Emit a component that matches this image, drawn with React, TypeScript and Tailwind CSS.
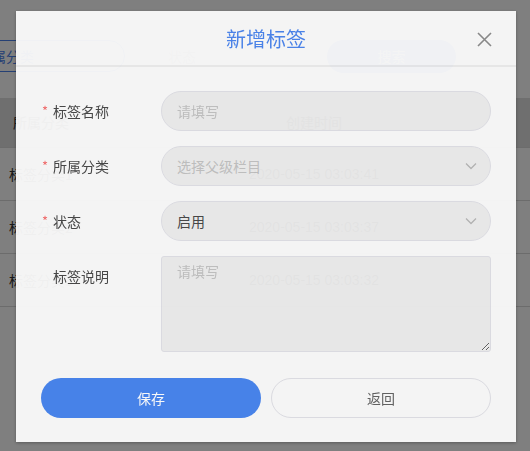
const rows = [
  { name: '标签分类1', time: '2020-05-15 03:03:41' },
  { name: '标签分类2', time: '2020-05-15 03:03:37' },
  { name: '标签分类3', time: '2020-05-15 03:03:32' },
];

const Chevron = () => (
  <svg width="12" height="8" viewBox="0 0 12 8" className="absolute right-[13px] top-1/2 -translate-y-1/2">
    <polyline points="1,1.5 6,6.5 11,1.5" fill="none" stroke="#b5b5b5" strokeWidth="1.3" />
  </svg>
);

const Label = ({ text, required }: { text: string; required?: boolean }) => (
  <div className="flex h-[40px] w-[145px] shrink-0 items-center pl-[26px] text-[14px] text-[#454545]">
    <span className="w-[11px] text-[13px] text-[#f56c6c]">{required ? '*' : ''}</span>
    <span>{text}</span>
  </div>
);

// the list page that sits under the dialog
const PageBehind = () => (
  <div className="absolute inset-0">
    <div className="flex h-[98px] items-start gap-3 pt-[40px]">
      <div className="ml-[-40px] flex h-[32px] w-[165px] items-center rounded-full border border-[#4a80e8] pl-[17px] text-[14px] text-[#4a80e8]">
        所属分类
      </div>
      <div className="flex h-[32px] w-[178px] items-center rounded-full border border-[#dcdcdc] pl-[30px] text-[14px] text-[#999]">
        状态
      </div>
      <div className="flex h-[33px] w-[129px] items-center justify-center rounded-full bg-[#4a80e8] text-[14px] text-white">
        搜索
      </div>
    </div>
    <div className="grid h-[49px] grid-cols-[82px_464px] items-center bg-[#dedede] text-[14px] text-[#333]">
      <div className="text-center">所属分类</div>
      <div className="text-center">创建时间</div>
    </div>
    {rows.map((r) => (
      <div
        key={r.name}
        className="grid h-[53px] grid-cols-[82px_464px] items-center border-t border-[#d8d8d8] text-[14px] text-[#333]"
      >
        <div className="text-center">{r.name}</div>
        <div className="text-center font-['Liberation_Sans',sans-serif]">{r.time}</div>
      </div>
    ))}
    <div className="border-t border-[#d8d8d8]" />
  </div>
);

export default function App() {
  return (
    <div className="relative h-[451px] w-[530px] overflow-hidden bg-white font-['Noto_Sans_CJK_SC','Noto_Sans',sans-serif]">
      <PageBehind />
      <div className="absolute inset-0 bg-black/50" />

      <div className="absolute left-[16px] top-[11px] flex h-[431px] w-[500px] flex-col bg-[#fbfbfb] opacity-[0.95] shadow-[0_1px_3px_rgba(0,0,0,0.3)]">
        <div className="relative flex h-[56px] shrink-0 items-center justify-center border-b-2 border-[#ececec] pt-[2px]">
          <h3 className="text-[20px] text-[#4883ee]">新增标签</h3>
          <svg width="15" height="15" viewBox="0 0 15 15" className="absolute right-[24px] top-[21px]">
            <path d="M1 1L14 14M14 1L1 14" stroke="#8a8a8a" strokeWidth="1.6" />
          </svg>
        </div>

        <div className="flex flex-col gap-[15px] pt-[24px] pr-[25px]">
          <div className="flex">
            <Label text="标签名称" required />
            <input
              readOnly
              placeholder="请填写"
              className="h-[40px] flex-1 rounded-full border border-[#e0e0e6] bg-[#eeeeee] px-[15px] text-[14px] text-[#454545] outline-none placeholder:text-[#c1c1c1]"
            />
          </div>
          <div className="flex">
            <Label text="所属分类" required />
            <div className="relative flex h-[40px] flex-1 items-center rounded-full border border-[#e0e0e6] bg-[#eeeeee] px-[15px] text-[14px] text-[#c1c1c1]">
              选择父级栏目
              <Chevron />
            </div>
          </div>
          <div className="flex">
            <Label text="状态" required />
            <div className="relative flex h-[40px] flex-1 items-center rounded-full border border-[#e0e0e6] bg-[#eeeeee] px-[15px] text-[14px] text-[#454545]">
              启用
              <Chevron />
            </div>
          </div>
          <div className="flex">
            <Label text="标签说明" />
            <textarea
              readOnly
              placeholder="请填写"
              className="h-[96px] flex-1 rounded-[3px] border border-[#e0e0e6] bg-[#eeeeee] px-[15px] py-[4px] text-[14px] text-[#454545] outline-none placeholder:text-[#c1c1c1]"
            />
          </div>
        </div>

        <div className="flex gap-[10px] pl-[25px] pt-[26px]">
          <button className="h-[40px] w-[220px] rounded-full bg-[#4583ef] text-[14px] text-white">保存</button>
          <button className="h-[40px] w-[220px] rounded-full border border-[#e0e0e6] bg-[#fbfbfb] text-[14px] text-[#606060]">
            返回
          </button>
        </div>
      </div>
    </div>
  );
}
